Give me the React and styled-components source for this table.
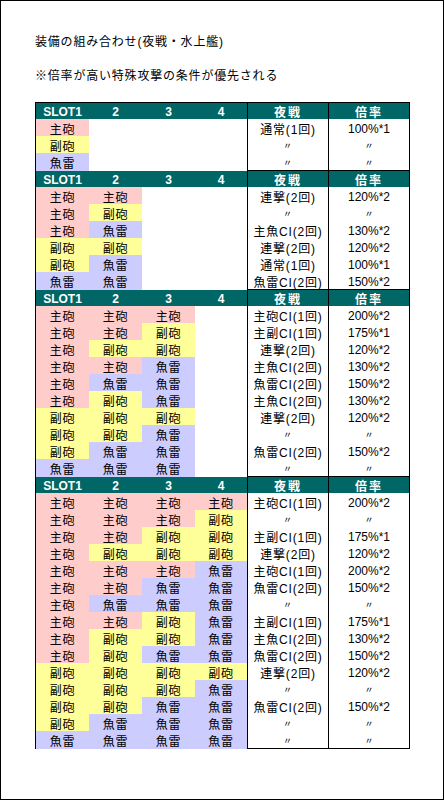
import React from 'react';
import styled, { createGlobalStyle } from 'styled-components';

const GlobalStyle = createGlobalStyle`
  body {
    margin: 0;
    background: #fff;
    font-family: 'Liberation Sans', 'Noto Sans CJK JP', sans-serif;
    color: #000;
  }
`;

const Sheet = styled.div`
  box-sizing: border-box;
  width: 444px;
  height: 800px;
  border: 1px solid #000;
  padding: 33px 0 0 34px;
  background: #fff;
`;

const Line = styled.div`
  height: 17px;
  line-height: 17px;
  margin-bottom: 17px;
  font-size: 12px;
  letter-spacing: 0.8px;
  white-space: nowrap;
`;

const Table = styled.div`
  width: 375px;
  box-sizing: border-box;
  border: 1px solid #000;
`;

const COLS = '53px 53px 53px 52px 81px 81px';

const HeaderRow = styled.div`
  display: grid;
  grid-template-columns: ${COLS};
  box-sizing: border-box;
  height: ${(p) => (p.$first ? '16px' : '17px')};
  border-top: ${(p) => (p.$first ? 'none' : '1px solid #000')};
  background: #006666;
  color: #fff;
  font-weight: bold;
  font-size: 12px;
`;

const HeadCell = styled.div`
  display: flex;
  align-items: center;
  justify-content: center;
  box-sizing: border-box;
  border-left: ${(p) => (p.$ruled ? '1px solid #000' : 'none')};
  letter-spacing: ${(p) => (p.$wide ? '2px' : '0')};
`;

const Row = styled.div`
  display: grid;
  grid-template-columns: ${COLS};
  height: 17px;
`;

const slotColors = {
  主砲: '#ffcccc',
  副砲: '#ffff99',
  魚雷: '#ccccff',
};

const SlotCell = styled.div`
  display: flex;
  align-items: center;
  justify-content: center;
  padding-top: 1px;
  box-sizing: border-box;
  font-size: 12px;
  letter-spacing: 0.8px;
  background: ${(p) => slotColors[p.$kind] || '#fff'};
`;

const AttackCell = styled.div`
  display: flex;
  align-items: center;
  justify-content: center;
  padding-top: 1px;
  box-sizing: border-box;
  border-left: 1px solid #000;
  font-size: 12px;
  letter-spacing: 0.8px;
`;

const RateCell = styled(AttackCell)`
  letter-spacing: 0;
`;

const Ditto = styled.span`
  font-family: 'Noto Sans CJK JP', sans-serif;
  font-size: 9px;
`;

const same = (v) => (v === '〃' ? <Ditto>〃</Ditto> : v);

const sections = [
  [
    [['主砲'], '通常(1回)', '100%*1'],
    [['副砲'], '〃', '〃'],
    [['魚雷'], '〃', '〃'],
  ],
  [
    [['主砲', '主砲'], '連撃(2回)', '120%*2'],
    [['主砲', '副砲'], '〃', '〃'],
    [['主砲', '魚雷'], '主魚CI(2回)', '130%*2'],
    [['副砲', '副砲'], '連撃(2回)', '120%*2'],
    [['副砲', '魚雷'], '通常(1回)', '100%*1'],
    [['魚雷', '魚雷'], '魚雷CI(2回)', '150%*2'],
  ],
  [
    [['主砲', '主砲', '主砲'], '主砲CI(1回)', '200%*2'],
    [['主砲', '主砲', '副砲'], '主副CI(1回)', '175%*1'],
    [['主砲', '副砲', '副砲'], '連撃(2回)', '120%*2'],
    [['主砲', '主砲', '魚雷'], '主魚CI(2回)', '130%*2'],
    [['主砲', '魚雷', '魚雷'], '魚雷CI(2回)', '150%*2'],
    [['主砲', '副砲', '魚雷'], '主魚CI(2回)', '130%*2'],
    [['副砲', '副砲', '副砲'], '連撃(2回)', '120%*2'],
    [['副砲', '副砲', '魚雷'], '〃', '〃'],
    [['副砲', '魚雷', '魚雷'], '魚雷CI(2回)', '150%*2'],
    [['魚雷', '魚雷', '魚雷'], '〃', '〃'],
  ],
  [
    [['主砲', '主砲', '主砲', '主砲'], '主砲CI(1回)', '200%*2'],
    [['主砲', '主砲', '主砲', '副砲'], '〃', '〃'],
    [['主砲', '主砲', '副砲', '副砲'], '主副CI(1回)', '175%*1'],
    [['主砲', '副砲', '副砲', '副砲'], '連撃(2回)', '120%*2'],
    [['主砲', '主砲', '主砲', '魚雷'], '主砲CI(1回)', '200%*2'],
    [['主砲', '主砲', '魚雷', '魚雷'], '魚雷CI(2回)', '150%*2'],
    [['主砲', '魚雷', '魚雷', '魚雷'], '〃', '〃'],
    [['主砲', '主砲', '副砲', '魚雷'], '主副CI(1回)', '175%*1'],
    [['主砲', '副砲', '副砲', '魚雷'], '主魚CI(2回)', '130%*2'],
    [['主砲', '副砲', '魚雷', '魚雷'], '魚雷CI(2回)', '150%*2'],
    [['副砲', '副砲', '副砲', '副砲'], '連撃(2回)', '120%*2'],
    [['副砲', '副砲', '副砲', '魚雷'], '〃', '〃'],
    [['副砲', '副砲', '魚雷', '魚雷'], '魚雷CI(2回)', '150%*2'],
    [['副砲', '魚雷', '魚雷', '魚雷'], '〃', '〃'],
    [['魚雷', '魚雷', '魚雷', '魚雷'], '〃', '〃'],
  ],
];

const Header = ({ first }) => (
  <HeaderRow $first={first}>
    <HeadCell>SLOT1</HeadCell>
    <HeadCell>2</HeadCell>
    <HeadCell>3</HeadCell>
    <HeadCell>4</HeadCell>
    <HeadCell $ruled $wide>夜戦</HeadCell>
    <HeadCell $ruled $wide>倍率</HeadCell>
  </HeaderRow>
);

const App = () => (
  <>
    <GlobalStyle />
    <Sheet>
      <Line>装備の組み合わせ(夜戦・水上艦)</Line>
      <Line>※倍率が高い特殊攻撃の条件が優先される</Line>
      <Table>
        {sections.map((rows, si) => (
          <React.Fragment key={si}>
            <Header first={si === 0} />
            {rows.map(([slots, attack, rate], ri) => (
              <Row key={ri}>
                {[0, 1, 2, 3].map((i) => (
                  <SlotCell key={i} $kind={slots[i]}>
                    {slots[i]}
                  </SlotCell>
                ))}
                <AttackCell>{same(attack)}</AttackCell>
                <RateCell>{same(rate)}</RateCell>
              </Row>
            ))}
          </React.Fragment>
        ))}
      </Table>
    </Sheet>
  </>
);

export default App;
